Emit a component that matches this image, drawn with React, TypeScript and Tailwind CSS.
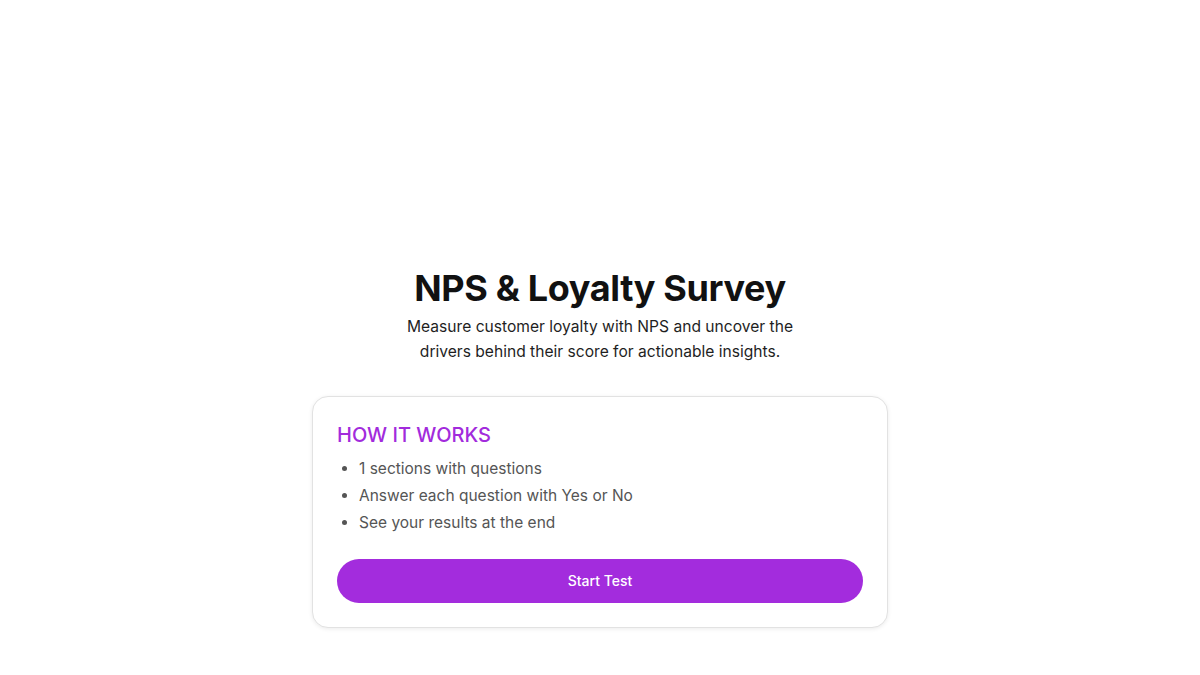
export default function App() {
  const steps = [
    '1 sections with questions',
    'Answer each question with Yes or No',
    'See your results at the end',
  ];

  return (
    <main
      className="min-h-screen bg-white flex flex-col items-center pt-[268px] px-4"
      style={{ fontFamily: 'Inter, "Noto Sans", sans-serif' }}
    >
      {/* Header */}
      <div className="text-center">
        <h1 className="text-[36px] leading-10 font-bold text-[#111111] tracking-[-0.01em]">
          NPS &amp; Loyalty Survey
        </h1>
        <p className="mt-1.5 text-[15.6px] leading-[25px] text-[#1f1f1f] max-w-[400px] mx-auto">
          Measure customer loyalty with NPS and uncover the drivers behind their score for
          actionable insights.
        </p>
      </div>

      {/* Card */}
      <div className="mt-8 w-[576px] rounded-2xl border border-[#e2e2e2] bg-white p-6 shadow-[0_1px_4px_rgba(0,0,0,0.08)]">
        <h2 className="text-[20px] leading-7 font-medium text-[#a22bdc] uppercase">How it works</h2>
        <ul className="mt-1.5 list-disc pl-[22px] text-[15.5px] leading-[27px] text-[#555555] marker:text-[#555555]">
          {steps.map((s) => (
            <li key={s}>{s}</li>
          ))}
        </ul>
        <button className="mt-[23px] w-full h-11 rounded-full bg-[#a32cdd] text-white text-sm font-medium">
          Start Test
        </button>
      </div>
    </main>
  );
}
